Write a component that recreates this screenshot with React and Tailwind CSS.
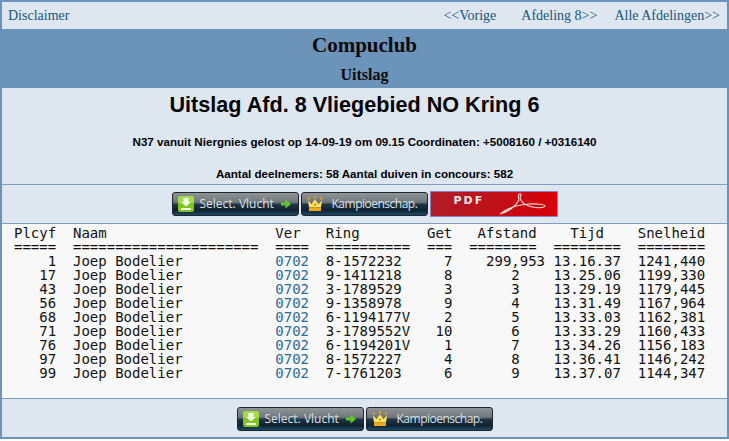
const rows = [
  ["1", "8-1572232 ", "7", "  299,953 ", "13.16.37", "1241,440"],
  ["17", "9-1411218 ", "8", "     2    ", "13.25.06", "1199,330"],
  ["43", "3-1789529 ", "3", "     3    ", "13.29.19", "1179,445"],
  ["56", "9-1358978 ", "9", "     4    ", "13.31.49", "1167,964"],
  ["68", "6-1194177V", "2", "     5    ", "13.33.03", "1162,381"],
  ["71", "3-1789552V", "10", "     6    ", "13.33.29", "1160,433"],
  ["76", "6-1194201V", "1", "     7    ", "13.34.26", "1156,183"],
  ["97", "8-1572227 ", "4", "     8    ", "13.36.41", "1146,242"],
  ["99", "7-1761203 ", "6", "     9    ", "13.37.07", "1144,347"],
];

function SelectIcon() {
  return (
    <svg width="18" height="18" viewBox="0 0 18 18" className="shrink-0">
      <rect x="1" y="1" width="16" height="16" rx="2.5" fill="#7fc41f" />
      <rect x="1" y="1" width="16" height="7" rx="2.5" fill="#a3dc4a" />
      <path d="M6.5 3h5v4h2.5L9 11.5 4 7h2.5z" fill="#f4fbe6" />
      <rect x="4" y="13" width="10" height="2" fill="#f4fbe6" />
    </svg>
  );
}

function Crown() {
  return (
    <svg width="16" height="16" viewBox="0 0 16 16" className="shrink-0">
      <circle cx="1.8" cy="2.5" r="1.2" fill="#e8a010" />
      <circle cx="8" cy="1.5" r="1.2" fill="#e8a010" />
      <circle cx="14.2" cy="2.5" r="1.2" fill="#e8a010" />
      <path d="M1 4.500l3.500 3.500L8 3.500l3.500 4.500L15 4.500l-1 7H2z" fill="#ffe25c" />
      <rect x="2" y="11.5" width="12" height="3.500" fill="#efa818" />
      <circle cx="8" cy="8.500" r="1" fill="#d9681c" />
    </svg>
  );
}

function DarkButton({ children }) {
  return (
    <div className="flex h-[24px] w-[127px] items-center rounded-[3px] border border-[#20262c] bg-[linear-gradient(180deg,#8f9496_0%,#70777b_42%,#1f3548_52%,#12202e_78%,#1a4a68_100%)] text-[12px] text-[#d8e2e6] [font-family:'Open_Sans',sans-serif]">
      {children}
    </div>
  );
}

function Buttons({ pdf }) {
  return (
    <div className="flex justify-center gap-[2px]">
      <DarkButton>
        <span className="ml-[4px]"><SelectIcon /></span>
        <span className="ml-[5px]">Select. Vlucht</span>
        <svg width="10" height="10" viewBox="0 0 10 10" className="ml-[7px] shrink-0">
          <path d="M0 3.5h4.5V0.5L10 5 4.5 9.5v-3H0z" fill="#5fc52a" />
        </svg>
      </DarkButton>
      <DarkButton>
        <span className="ml-[5px]"><Crown /></span>
        <span className="ml-[9px] tracking-[-0.5px]">Kampioenschap.</span>
      </DarkButton>
      {pdf && (
        <div className="relative -mt-px h-[26px] w-[128px] bg-[linear-gradient(90deg,#b01c28_0%,#c01018_50%,#d80008_100%)] border border-[#8a80c8]">
          <span className="absolute left-[23px] top-[2px] text-[11px] leading-[14px] font-bold tracking-[2px] text-[#f4e8e8] [font-family:'DejaVu_Sans',sans-serif]">PDF</span>
          <svg width="48" height="22" viewBox="0 0 48 22" className="absolute left-[68px] top-[1px]" fill="none" stroke="#f2dede" strokeWidth="1.1">
            <path d="M21 0.7C19 0.7 19 4 20 7C17 13 9 19 2 20.500C8 15 18 12 30 11C38 10.500 46 11.500 46 13C46 15 36 15.500 30 13C25 11.500 22 9 21 4.500C22 2 23 0.7 21 0.700Z" />
          </svg>
        </div>
      )}
    </div>
  );
}

export default function App() {
  return (
    <div className="h-[441px] w-[729px] overflow-hidden bg-white">
      <div className="flex h-[439px] flex-col border-x-2 border-t-[2px] border-b-[2px] border-[#6c93b9] bg-[#dee6f0]">
        <div className="flex h-[27px] shrink-0 items-center justify-between pl-[6px] pr-[7px] text-[14px] text-[#17567f] [font-family:'Liberation_Serif',serif]">
          <span>Disclaimer</span>
          <div className="flex">
            <span>&lt;&lt;Vorige</span>
            <span className="ml-[25px]">Afdeling 8&gt;&gt;</span>
            <span className="ml-[17px]">Alle Afdelingen&gt;&gt;</span>
          </div>
        </div>
        <div className="h-[59px] shrink-0 bg-[#6c93b9] text-center font-bold text-[#0a0a0a] [font-family:'Liberation_Serif',serif]">
          <div className="h-[32px] border-b border-[#6a92bc] text-[21px] leading-[32px]">Compuclub</div>
          <div className="text-[16px] leading-[28px]">Uitslag</div>
        </div>
        <div className="h-[97px] shrink-0 border-b border-[#7d9fc4] text-center font-bold text-black [font-family:'Liberation_Sans',sans-serif]">
          <div className="pr-[20px] pt-[4px] text-[21.6px] leading-[26px]">Uitslag Afd. 8 Vliegebied NO Kring 6</div>
          <div className="mt-[17px] text-[11.6px] leading-[14px]">N37 vanuit Niergnies gelost op 14-09-19 om 09.15 Coordinaten: +5008160 / +0316140</div>
          <div className="mt-[18px] text-[11.6px] leading-[14px]">Aantal deelnemers: 58 Aantal duiven in concours: 582</div>
        </div>
        <div className="h-[39px] shrink-0 border-b border-[#7d9fc4] pt-[7px]">
          <Buttons pdf />
        </div>
        <pre className="h-[175px] shrink-0 border-b border-[#7d9fc4] bg-[#f8f8f8] pl-[12px] pt-[2px] text-[14px] leading-[14px] text-[#111] [font-family:'DejaVu_Sans_Mono',monospace]">
          {"Plcyf  Naam                    Ver   Ring        Get   Afstand    Tijd    Snelheid\n"}
          {"=====  ======================  ====  ==========  ===  ========  ========  ========\n"}
          {rows.map((r) => (
            <span key={r[0]}>
              {r[0].padStart(5, " ") + "  Joep Bodelier           "}
              <span className="text-[#2b6c9e]">0702</span>
              {"  " + r[1] + "  " + r[2].padStart(3, " ") + "  " + r[3] + r[4] + "  " + r[5] + "\n"}
            </span>
          ))}
        </pre>
        <div className="pt-[8px]">
          <Buttons />
        </div>
      </div>
    </div>
  );
}
